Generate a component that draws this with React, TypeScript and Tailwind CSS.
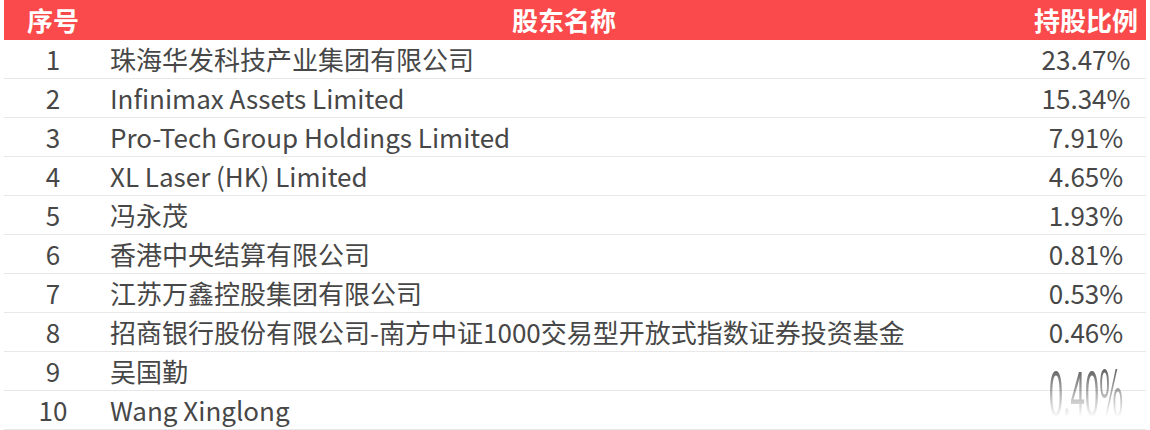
const rows = [
  { no: 1, name: '珠海华发科技产业集团有限公司', pct: '23.47%' },
  { no: 2, name: 'Infinimax Assets Limited', pct: '15.34%' },
  { no: 3, name: 'Pro-Tech Group Holdings Limited', pct: '7.91%' },
  { no: 4, name: 'XL Laser (HK) Limited', pct: '4.65%' },
  { no: 5, name: '冯永茂', pct: '1.93%' },
  { no: 6, name: '香港中央结算有限公司', pct: '0.81%' },
  { no: 7, name: '江苏万鑫控股集团有限公司', pct: '0.53%' },
  { no: 8, name: '招商银行股份有限公司-南方中证1000交易型开放式指数证券投资基金', pct: '0.46%' },
  { no: 9, name: '吴国勤', pct: '0.40%', smear: true },
  { no: 10, name: 'Wang Xinglong', pct: '' },
];

export default function App() {
  return (
    <div
      className="w-[1150px] h-[430px] overflow-hidden bg-white px-[4px]"
      style={{ fontFamily: '"Noto Sans CJK SC", "Noto Sans", sans-serif' }}
    >
      <div className="flex h-[40px] items-center bg-[#fa4a4b] text-[26px] font-bold text-white leading-none">
        <div className="w-[98px] text-center">序号</div>
        <div className="flex-1 text-center">股东名称</div>
        <div className="w-[120px] text-center">持股比例</div>
      </div>
      {rows.map((r) => (
        <div
          key={r.no}
          className="flex h-[39px] items-center border-b border-[#e8e8e8] text-[26px] text-[#474747] leading-none"
        >
          <div className="w-[98px] text-center">{r.no}</div>
          <div className="flex-1 pl-[8px] whitespace-nowrap">{r.name}</div>
          <div className="w-[120px] text-center">
            {r.smear ? (
              <span className="inline-block origin-top scale-y-[2.4] text-[#666] [mask-image:linear-gradient(to_bottom,black_20%,transparent_95%)]">
                {r.pct}
              </span>
            ) : (
              r.pct
            )}
          </div>
        </div>
      ))}
    </div>
  );
}
